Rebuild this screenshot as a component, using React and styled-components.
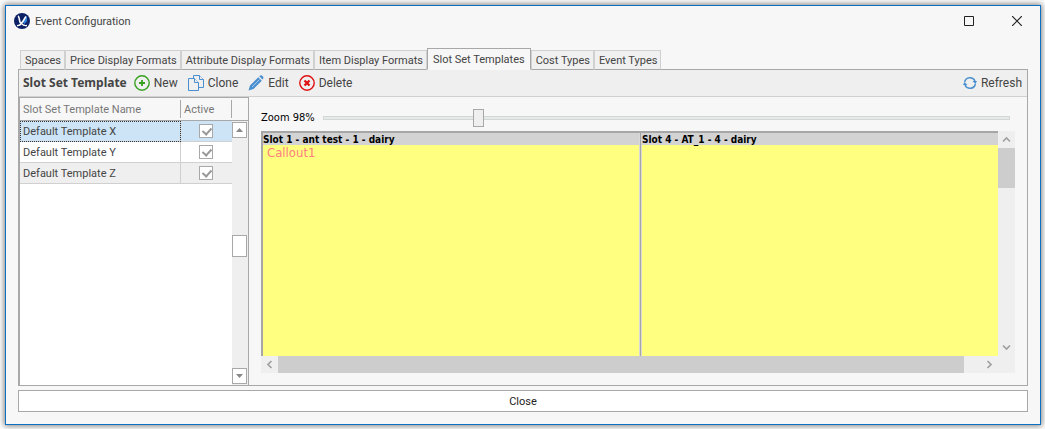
import React from "react";
import styled, { createGlobalStyle } from "styled-components";

const Global = createGlobalStyle`
  * { box-sizing: border-box; }
  html, body { margin: 0; }
  body {
    background: #fff;
    font-family: Roboto, Tahoma, "Noto Sans", sans-serif;
    font-size: 11px;
    line-height: 14px;
    color: #444;
  }
  button { font: inherit; color: inherit; padding: 0; margin: 0; border: 0; background: none; }
  svg { display: block; flex: none; }
`;

const Page = styled.div`
  display: flex;
  min-height: 100vh;
  padding: 5px 4px 4px 5px;
`;

const Window = styled.main`
  flex: 1;
  min-width: 0;
  display: flex;
  flex-direction: column;
  background: #f7f7f7;
  border: 1px solid #0d6fc0;
  box-shadow: 0 0 6px 1px rgba(0, 0, 0, 0.5);
`;

const TitleBar = styled.header`
  display: flex;
  align-items: center;
  height: 30px;
  padding-left: 8px;
`;

const Title = styled.h1`
  flex: 1;
  margin: 0 0 0 5px;
  padding-top: 1px;
  font-size: 11px;
  font-weight: 400;
`;

const WindowButton = styled.button`
  display: grid;
  place-items: center;
  width: ${(p) => p.$width}px;
  height: 30px;
`;

const Content = styled.div`
  flex: 1;
  display: flex;
  flex-direction: column;
  padding: 12px;
`;

const Tabs = styled.nav`
  display: flex;
  align-items: flex-end;
  height: 22px;
  margin-bottom: -1px;
  padding-left: 2px;
  position: relative;
`;

const Tab = styled.button`
  height: ${(p) => (p.$active ? 22 : 20)}px;
  padding: ${(p) => (p.$active ? "1px 5px 0" : "1px 3px 0 4px")};
  border: 1px solid ${(p) => (p.$active ? "#a8a8a8" : "#d0d0d0")};
  border-bottom-color: ${(p) => (p.$active ? "#f7f7f7" : "#a8a8a8")};
  background: ${(p) => (p.$active ? "#f7f7f7" : "#f0f0f0")};
  white-space: nowrap;
`;

const Panel = styled.section`
  flex: 1;
  display: flex;
  flex-direction: column;
  border: 1px solid #a8a8a8;
`;

const Toolbar = styled.div`
  display: flex;
  align-items: center;
  height: 27px;
  padding: 0 5px 0 4px;
  background: #efefef;
  border-bottom: 1px solid #d0d0d0;
  font-size: 12px;
`;

const ToolbarTitle = styled.strong`
  margin-right: 7px;
  font-family: "Noto Sans", sans-serif;
`;

const ToolButton = styled.button`
  display: flex;
  align-items: center;
  gap: 4px;
  margin-right: ${(p) => (p.$end ? 0 : 10)}px;
  margin-left: ${(p) => (p.$end ? "auto" : 0)};
`;

const Body = styled.div`
  flex: 1;
  display: flex;
`;

const ListPane = styled.div`
  display: flex;
  width: 230px;
  border: 1px solid #a8a8a8;
  border-bottom: 0;
  background: #fff;
`;

const List = styled.div`
  flex: 1;
`;

const Table = styled.table`
  width: 100%;
  table-layout: fixed;
  border-collapse: separate;
  border-spacing: 0;
`;

const HeadCell = styled.th`
  width: ${(p) => p.$width};
  height: 23px;
  padding: 2px 0;
  background: #f7f7f7;
  border-bottom: 1px solid #a8a8a8;
  font-weight: 400;
  color: #777;
  text-align: left;
`;

const HeadLabel = styled.div`
  height: 18px;
  padding-left: 3px;
  line-height: 20px;
  border-right: 1px solid #a8a8a8;
`;

const Row = styled.tr`
  height: 21px;
  background: ${(p) => p.$fill};
`;

const Cell = styled.td`
  height: 21px;
  padding: ${(p) => (p.$last ? "0 4px 0 3px" : "2px 3px 0")};
  border-right: ${(p) => (p.$last ? 0 : 1)}px solid #d0d0d0;
  border-bottom: 1px solid #d0d0d0;
  outline: ${(p) => (p.$focused ? "1px dotted #333" : "none")};
  outline-offset: -1px;
`;

const Check = styled.input`
  appearance: none;
  display: block;
  width: 14px;
  height: 14px;
  margin: 0 auto;
  background: #fff;
  border: 1px solid #a8a8a8;
  &:checked::after {
    content: "";
    display: block;
    width: 4px;
    height: 7px;
    margin: 1px 0 0 4px;
    border: solid #999;
    border-width: 0 2px 2px 0;
    transform: rotate(42deg);
  }
`;

const ListScroll = styled.div`
  display: flex;
  flex-direction: column;
  width: 16px;
  padding-bottom: 1px;
  background: #efefef;
`;

const ScrollHead = styled.div`
  height: 23px;
  margin-bottom: 1px;
  background: #f7f7f7;
  border-bottom: 1px solid #a8a8a8;
`;

const ScrollBox = styled.button`
  display: grid;
  place-items: center;
  width: 15px;
  height: ${(p) => p.$height}px;
  background: #fff;
  border: 1px solid #a8a8a8;
`;

const Spacer = styled.div`
  flex: ${(p) => p.$grow};
`;

const Preview = styled.div`
  flex: 1;
  min-width: 0;
  display: flex;
  flex-direction: column;
  padding: 11px 12px 12px;
  font-family: "DejaVu Sans Condensed", Tahoma, sans-serif;
`;

const ZoomRow = styled.div`
  display: flex;
  align-items: center;
  gap: 8px;
  height: 20px;
  margin-right: 5px;
  color: #000;
`;

const Slider = styled.input`
  appearance: none;
  flex: 1;
  height: 18px;
  margin: 0;
  background: none;
  &::-webkit-slider-runnable-track {
    height: 4px;
    background: #e6eae9;
    border: 1px solid #d2d6d5;
  }
  &::-webkit-slider-thumb {
    appearance: none;
    width: 11px;
    height: 18px;
    margin-top: -8px;
    background: #efefef;
    border: 1px solid #a8a8a8;
  }
`;

const Viewport = styled.div`
  flex: 1;
  display: grid;
  grid-template-columns: 1fr 17px;
  grid-template-rows: 1fr 17px;
  min-height: 200px;
  margin-top: 3px;
  background: #efefef;
`;

const Slots = styled.div`
  display: flex;
  border: solid #a6a6a6;
  border-width: 2px 0 0 2px;
`;

const Slot = styled.article`
  flex: ${(p) => p.$grow};
  min-width: 0;
  display: flex;
  flex-direction: column;
  background: #ffff80;
  border: solid #a6a6a6;
  border-width: 0 0 0 ${(p) => (p.$divided ? 1 : 0)}px;
  & + & { box-shadow: -1px 0 #d9d9d9, inset 1px 0 #d9d9d9; }
`;

const SlotTitle = styled.h2`
  height: 12px;
  margin: 0;
  padding-left: ${(p) => (p.$inset ? 1 : 0)}px;
  background: #d3d3d3;
  color: #000;
  font-size: 10px;
  line-height: 13px;
  font-weight: 700;
  white-space: nowrap;
`;

const Callout = styled.p`
  margin: 0 0 0 4px;
  color: #ff8080;
  font-size: 13px;
  line-height: 15px;
`;

const Bar = styled.div`
  display: flex;
  flex-direction: ${(p) => (p.$vertical ? "column" : "row")};
`;

const ArrowButton = styled.button`
  display: grid;
  place-items: center;
  width: 17px;
  height: 17px;
`;

const Thumb = styled.div`
  flex: ${(p) => p.$grow};
  background: #cdcdcd;
`;

const CloseButton = styled.button`
  height: 22px;
  margin-top: 4px;
  padding-top: 1px;
  background: #fff;
  border: 1px solid #a8a8a8;
  color: #222;
`;

const Logo = () => (
  <svg width="16" height="16" viewBox="0 0 16 16" aria-hidden="true">
    <circle cx="8" cy="8" r="8" fill="#0c2166" />
    <path d="M8.500 9 13 3v5L10.500 11z" fill="#2f7fdc" />
    <path d="M4 3C6 4 5 10 7 10S9.500 6.500 12 3.500" fill="none" stroke="#fff" strokeWidth="1.600" />
    <path d="M3 12.500c2 .3 3.500-.7 4.500-2 1.200 1.500 3 2.500 5.500 2" fill="none" stroke="#fff" strokeWidth="1.300" />
  </svg>
);

const Plus = () => (
  <svg width="16" height="16" viewBox="0 0 16 16" fill="none" stroke="#35a11f" aria-hidden="true">
    <circle cx="8" cy="8" r="7.200" strokeWidth="1.400" />
    <path d="M8 5v6M5 8h6" strokeWidth="1.800" />
  </svg>
);

const Copy = () => (
  <svg width="16" height="16" viewBox="0 0 16 16" fill="#efefef" stroke="#4a90d0" aria-hidden="true">
    <path d="M5.500 12.500v-12h6l4 4v8z" />
    <path d="M11.500.5v4h4" />
    <path d="M.5 15.500v-12h6l4 4v8z" />
    <path d="M6.500 3.500v4h4" />
  </svg>
);

const Pencil = () => (
  <svg width="16" height="16" viewBox="0 0 16 16" aria-hidden="true">
    <path d="M.5 15.500 2 10.500 10.300 2.200l3.500 3.500L5.500 14zM11.200 1.300 12.300.4q1.200-.7 2.300.5t.8 2.300l-.9 1.300z" fill="#4a90d0" />
    <path d="M4 12 11.500 4.500" stroke="#a9cbe9" />
  </svg>
);

const Cross = () => (
  <svg width="16" height="16" viewBox="0 0 16 16" fill="none" stroke="#e01010" aria-hidden="true">
    <circle cx="8" cy="8" r="7.200" strokeWidth="1.400" />
    <path d="m5.500 5.500 5 5M10.500 5.500l-5 5" strokeWidth="2.300" />
  </svg>
);

const Refresh = () => (
  <svg width="14" height="14" viewBox="0 0 14 14" aria-hidden="true">
    <path d="M1.600 6A5.500 5.500 0 0 1 12 5M12.400 8A5.500 5.500 0 0 1 2 9" fill="none" stroke="#4a90d0" strokeWidth="1.500" />
    <path d="M9.500 5H14L12.500 8zM4.500 9H0L1.500 6z" fill="#4a90d0" />
  </svg>
);

const Chevron = ({ turn }) => (
  <svg width="9" height="9" viewBox="0 0 9 9" aria-hidden="true">
    <path d="M1 6.500 4.500 3 8 6.500" transform={`rotate(${turn} 4.500 4.500)`} fill="none" stroke="#a0a0a0" strokeWidth="1.700" />
  </svg>
);

const Triangle = ({ down }) => (
  <svg width="7" height="4" viewBox="0 0 7 4" aria-hidden="true">
    <path d={down ? "M0 0h7L3.500 4z" : "M0 4h7L3.500 0z"} fill="#888" />
  </svg>
);

const tabs = [
  "Spaces",
  "Price Display Formats",
  "Attribute Display Formats",
  "Item Display Formats",
  "Slot Set Templates",
  "Cost Types",
  "Event Types",
];

const templates = [
  { name: "Default Template X", fill: "#cde4f7", focused: true },
  { name: "Default Template Y", fill: "#fff" },
  { name: "Default Template Z", fill: "#efefef" },
];

export default function App() {
  return (
    <Page>
      <Global />
      <Window>
        <TitleBar>
          <Logo />
          <Title>Event Configuration</Title>
          <WindowButton $width={50} aria-label="Maximize">
            <svg width="10" height="10" aria-hidden="true">
              <path d="M.5.5h9v9h-9z" fill="none" stroke="#222" />
            </svg>
          </WindowButton>
          <WindowButton $width={46} aria-label="Close window">
            <svg width="10" height="10" aria-hidden="true">
              <path d="m0 0 10 10M10 0 0 10" stroke="#222" strokeWidth="1.200" />
            </svg>
          </WindowButton>
        </TitleBar>
        <Content>
          <Tabs>
            {tabs.map((name) => (
              <Tab key={name} $active={name === "Slot Set Templates"}>{name}</Tab>
            ))}
          </Tabs>
          <Panel>
            <Toolbar>
              <ToolbarTitle>Slot Set Template</ToolbarTitle>
              <ToolButton><Plus />New</ToolButton>
              <ToolButton><Copy />Clone</ToolButton>
              <ToolButton><Pencil />Edit</ToolButton>
              <ToolButton><Cross />Delete</ToolButton>
              <ToolButton $end><Refresh />Refresh</ToolButton>
            </Toolbar>
            <Body>
              <ListPane>
                <List>
                  <Table>
                    <thead>
                      <tr>
                        <HeadCell $width="auto"><HeadLabel>Slot Set Template Name</HeadLabel></HeadCell>
                        <HeadCell $width="51px"><HeadLabel>Active</HeadLabel></HeadCell>
                      </tr>
                    </thead>
                    <tbody>
                      {templates.map((t) => (
                        <Row key={t.name} $fill={t.fill}>
                          <Cell $focused={t.focused}>{t.name}</Cell>
                          <Cell $last>
                            <Check type="checkbox" defaultChecked aria-label={`${t.name} active`} />
                          </Cell>
                        </Row>
                      ))}
                    </tbody>
                  </Table>
                </List>
                <ListScroll>
                  <ScrollHead />
                  <ScrollBox $height={16} aria-label="Scroll up"><Triangle /></ScrollBox>
                  <Spacer $grow={97} />
                  <ScrollBox $height={22} aria-label="Scroll position" />
                  <Spacer $grow={110} />
                  <ScrollBox $height={16} aria-label="Scroll down"><Triangle down /></ScrollBox>
                </ListScroll>
              </ListPane>
              <Preview>
                <ZoomRow>
                  <label htmlFor="zoom">Zoom 98%</label>
                  <Slider id="zoom" type="range" min="0" max="443" defaultValue="98" />
                </ZoomRow>
                <Viewport>
                  <Slots>
                    <Slot $grow={377}>
                      <SlotTitle>Slot 1 - ant test - 1 - dairy</SlotTitle>
                      <Callout>Callout1</Callout>
                    </Slot>
                    <Slot $grow={357} $divided>
                      <SlotTitle $inset>Slot 4 - AT_1 - 4 - dairy</SlotTitle>
                    </Slot>
                  </Slots>
                  <Bar $vertical>
                    <ArrowButton aria-label="Scroll preview up"><Chevron turn={0} /></ArrowButton>
                    <Thumb $grow={40} />
                    <Spacer $grow={151} />
                    <ArrowButton aria-label="Scroll preview down"><Chevron turn={180} /></ArrowButton>
                  </Bar>
                  <Bar>
                    <ArrowButton aria-label="Scroll preview left"><Chevron turn={270} /></ArrowButton>
                    <Thumb $grow={686} />
                    <Spacer $grow={17} />
                    <ArrowButton aria-label="Scroll preview right"><Chevron turn={90} /></ArrowButton>
                  </Bar>
                </Viewport>
              </Preview>
            </Body>
          </Panel>
          <CloseButton>Close</CloseButton>
        </Content>
      </Window>
    </Page>
  );
}
